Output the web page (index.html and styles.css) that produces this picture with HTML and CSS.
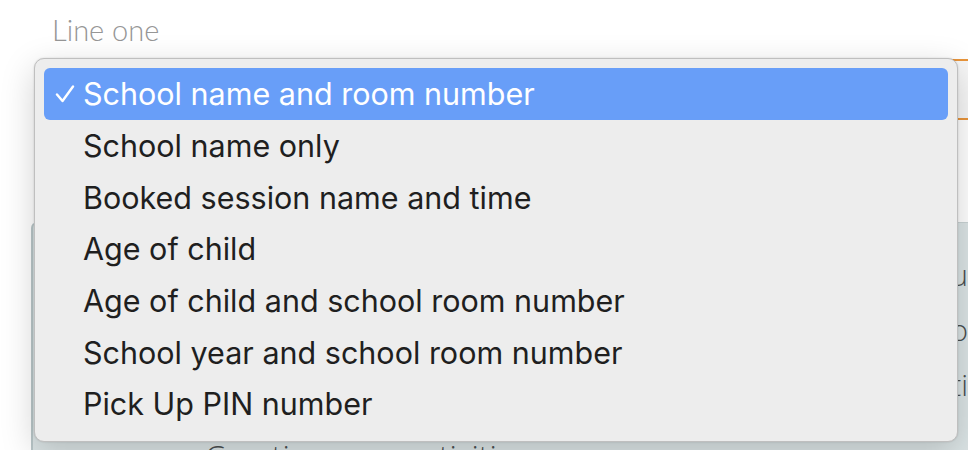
FILE: index.html
```html
<!DOCTYPE html>
<html lang="en">
<head>
<meta charset="utf-8">
<title>Line one</title>
<link rel="stylesheet" href="styles.css">
</head>
<body>
<div class="page">
  <div class="field">
    <label class="field-label">Line one</label>
    <div class="select-box"></div>
  </div>
  <div class="gap"></div>
  <div class="panel">
    <div class="panel-body">
      <p class="panel-line">Choose what appears on the label pictu</p>
      <p class="panel-line">Then print it out to</p>
      <p class="panel-line">before the session starts ti</p>
      <p class="panel-title">Creating your activities</p>
    </div>
  </div>

  <ul class="menu">
    <li class="menu-item selected">
      <svg class="check" viewBox="0 0 20 18" width="20" height="18"><path d="M2 9.5 L7.5 16 L18 1.5" fill="none" stroke="#fff" stroke-width="2.4" stroke-linecap="round" stroke-linejoin="round"/></svg>
      <span>School name and room number</span>
    </li>
    <li class="menu-item"><span>School name only</span></li>
    <li class="menu-item"><span>Booked session name and time</span></li>
    <li class="menu-item"><span>Age of child</span></li>
    <li class="menu-item"><span>Age of child and school room number</span></li>
    <li class="menu-item"><span>School year and school room number</span></li>
    <li class="menu-item"><span>Pick Up PIN number</span></li>
  </ul>
</div>
</body>
</html>
```
FILE: styles.css
```css
html, body {
  margin: 0;
  padding: 0;
  background: #ffffff;
  overflow: hidden;
}

.page {
  position: relative;
  width: 968px;
  height: 450px;
  overflow: hidden;
}

.field {
  padding: 10px 0 0 40px;
}

.field-label {
  display: block;
  margin-left: 12px;
  font-family: Lato, "Liberation Sans", sans-serif;
  font-weight: 300;
  font-size: 29px;
  line-height: 40px;
  color: #969696;
  height: 49px;
}

.select-box {
  height: 57px;
  margin-right: -20px;
  border: 2px solid #e9953b;
  border-radius: 6px;
  background: #f7f7f7;
}

.gap {
  height: 102px;
}

.panel {
  margin-left: 31px;
  margin-right: -40px;
  height: 240px;
  background: #dbe4e5;
  border-left: 2px solid #b9c6c8;
  border-top: 1px solid #c9d3d4;
  border-top-left-radius: 6px;
}

.panel-body {
  padding: 24px 0 0 172px;
  font-family: "Open Sans", "Liberation Sans", sans-serif;
  font-weight: 300;
  font-size: 30px;
  color: #4a4f50;
}

.panel-line {
  margin: 0;
  height: 55px;
  line-height: 55px;
  text-align: right;
  padding-right: 40px;
  white-space: nowrap;
}

.panel-title {
  margin: 24px 0 0 0;
  line-height: 40px;
  font-size: 32px;
}

.menu {
  position: absolute;
  left: 34px;
  top: 58px;
  width: 906px;
  height: 366px;
  margin: 0;
  padding: 9px 8px 7px 8px;
  list-style: none;
  background: #ededed;
  border: 1px solid #bfbfbf;
  border-radius: 10px;
  box-shadow: 0 10px 34px rgba(0, 0, 0, 0.18), 0 0 2px rgba(0, 0, 0, 0.15);
  font-family: Inter, "Noto Sans", sans-serif;
  font-size: 30.5px;
  color: #1f1f1f;
}

.menu-item {
  display: flex;
  align-items: center;
  height: 51.7px;
  padding-left: 39px;
  border-radius: 6px;
  position: relative;
  margin: 0 1px;
}

.menu-item.selected {
  background: #689ef8;
  color: #ffffff;
}

.check {
  position: absolute;
  left: 11px;
  top: 17px;
}
```
